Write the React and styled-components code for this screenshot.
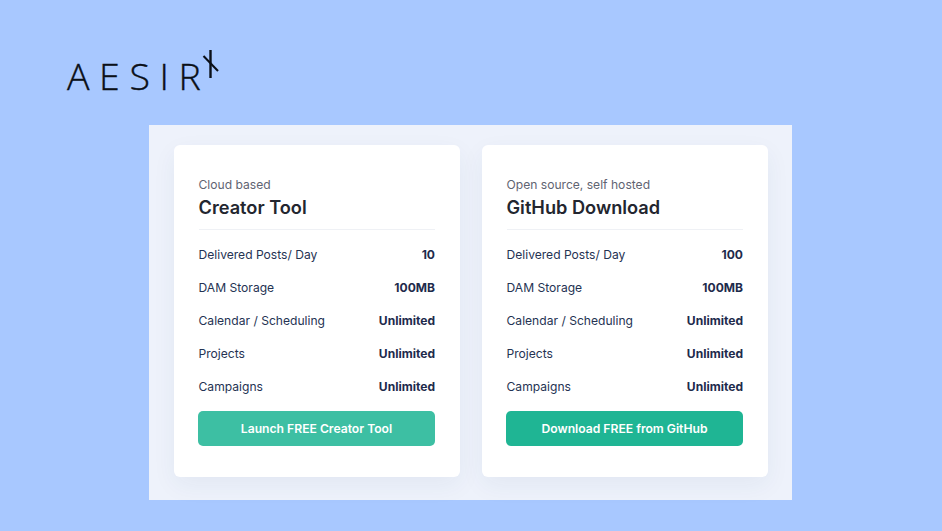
import React from "react";
import styled, { createGlobalStyle } from "styled-components";

const Global = createGlobalStyle`
  html, body { margin: 0; padding: 0; }
  body { background: #a8c8ff; font-family: Inter, "Liberation Sans", sans-serif; }
`;

const Page = styled.div`
  width: 942px;
  height: 531px;
  overflow: hidden;
  background: #a8c8ff;
  display: flex;
  flex-direction: column;
  box-sizing: border-box;
`;

const Header = styled.header`
  height: 125px;
  padding: 48px 0 0 67px;
  box-sizing: border-box;
  display: flex;
  align-items: flex-start;
`;

const LogoWord = styled.span`
  font-family: "Open Sans", "Liberation Sans", sans-serif;
  font-weight: 300;
  -webkit-text-stroke: 0.35px #0b1018;
  font-size: 37.5px;
  line-height: 44px;
  letter-spacing: 9.6px;
  color: #0b1018;
  margin-top: 6px;
`;

const LogoMark = styled.svg`
  width: 20px;
  height: 40px;
  margin-left: -9px;
  flex: none;
`;

const Panel = styled.section`
  margin-left: 149px;
  width: 643px;
  height: 375px;
  background: #eef2fb;
  box-sizing: border-box;
  padding: 20px 24px 0 25px;
  display: flex;
  gap: 22px;
  align-items: flex-start;
`;

const Card = styled.article`
  width: 286px;
  height: 332px;
  box-sizing: border-box;
  background: #fff;
  border-radius: 6px;
  padding: 32px 25px 0 24.5px;
  box-shadow: 0 8px 24px rgba(40, 60, 110, 0.06);
  display: flex;
  flex-direction: column;
`;

const Eyebrow = styled.div`
  font-size: 12.1px;
  line-height: 15px;
  color: #5f6472;
`;

const Title = styled.h2`
  margin: 3px 0 0;
  font-size: 18.2px;
  line-height: 24px;
  font-weight: 600;
  color: #23262f;
`;

const Divider = styled.hr`
  border: 0;
  height: 1px;
  background: #eff1f5;
  margin: 10px 0 0;
`;

const Rows = styled.div`
  margin-top: 7.5px;
  display: flex;
  flex-direction: column;
`;

const Row = styled.div`
  height: 33px;
  display: flex;
  align-items: center;
  justify-content: space-between;
  font-size: 12.1px;
  color: #253353;
`;

const Value = styled.span`
  font-weight: 700;
  font-size: 12.05px;
  color: #1e2b4c;
`;

const Action = styled.button`
  margin: 8.5px 0 0 -0.5px;
  height: 35px;
  width: calc(100% + 0.5px);
  border: 0;
  border-radius: 5px;
  background: ${(p) => (p.$muted ? "#3dbfa3" : "#1fb594")};
  color: #fff;
  font-family: Inter, "Liberation Sans", sans-serif;
  font-weight: 600;
  font-size: 12.15px;
  padding: 0;
`;

const plans = [
  { eyebrow: "Cloud based", title: "Creator Tool", posts: "10", action: "Launch FREE Creator Tool", muted: true },
  { eyebrow: "Open source, self hosted", title: "GitHub Download", posts: "100", action: "Download FREE from GitHub", muted: false },
];

export default function App() {
  return (
    <Page>
      <Global />
      <Header>
        <LogoWord>AESIR</LogoWord>
        <LogoMark viewBox="0 0 20 40" aria-hidden="true">
          <path d="M9.5 2v28" stroke="#0b1018" strokeWidth="2.4" fill="none" />
          <path d="M2.5 8L17 23" stroke="#0b1018" strokeWidth="2" fill="none" />
        </LogoMark>
      </Header>
      <Panel>
        {plans.map((p) => (
          <Card key={p.title}>
            <Eyebrow>{p.eyebrow}</Eyebrow>
            <Title>{p.title}</Title>
            <Divider />
            <Rows>
              <Row><span>Delivered Posts/ Day</span><Value>{p.posts}</Value></Row>
              <Row><span>DAM Storage</span><Value>100MB</Value></Row>
              <Row><span>Calendar / Scheduling</span><Value>Unlimited</Value></Row>
              <Row><span>Projects</span><Value>Unlimited</Value></Row>
              <Row><span>Campaigns</span><Value>Unlimited</Value></Row>
            </Rows>
            <Action $muted={p.muted}>{p.action}</Action>
          </Card>
        ))}
      </Panel>
    </Page>
  );
}
